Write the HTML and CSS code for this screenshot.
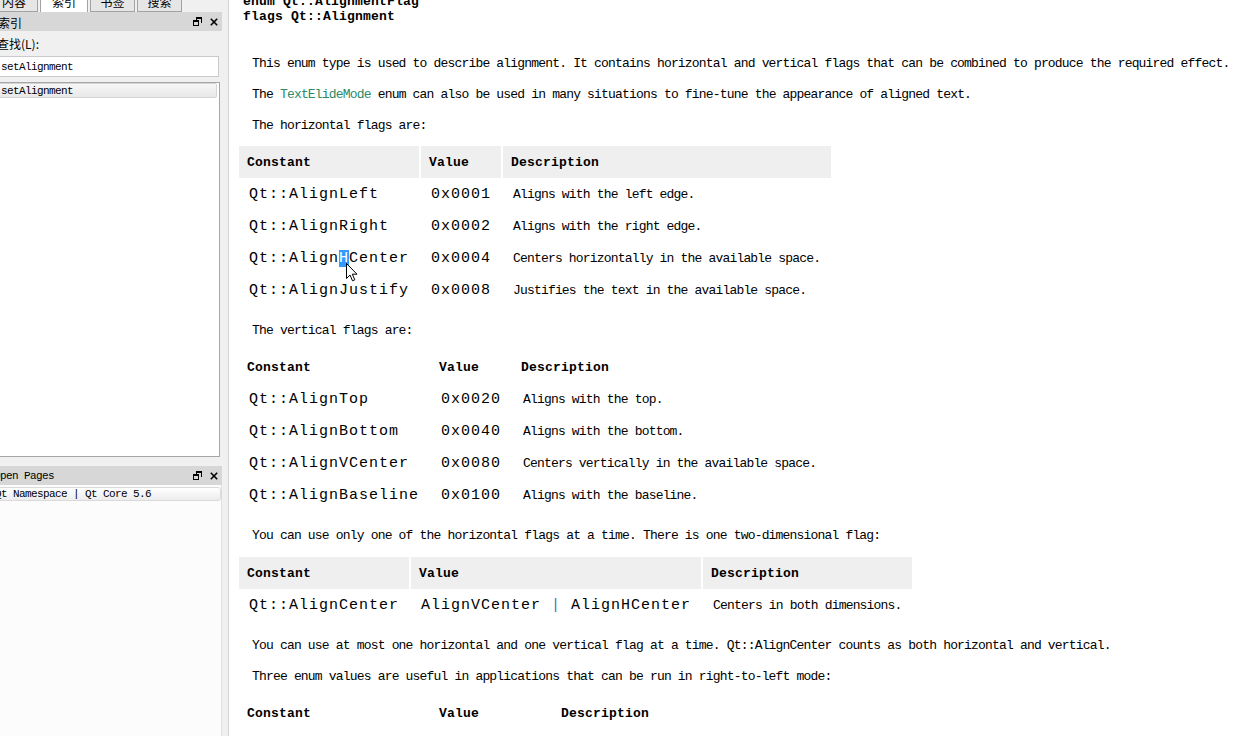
FILE: index.html
```html
<!DOCTYPE html>
<html>
<head>
    <meta charset="utf-8">
    <title>Qt Assistant - Qt Namespace</title>
    <link rel="stylesheet" href="styles.css">
</head>
<body>
<div class="window">
    <div class="sidebar">
        <div class="tabs">
            <div class="tab tab-first">内容</div>
            <div class="tab active">索引</div>
            <div class="tab">书签</div>
            <div class="tab">搜索</div>
        </div>
        <div class="dock-title">
            <span class="dock-name cjk">索引</span>
            <span class="dock-buttons">
                <svg width="9" height="9" viewBox="0 0 9 9"><path d="M3 0h6v6h-1v-4h-4v1h-1z" fill="#000"/><path d="M0 3h6v6h-6z M1 5v3h4v-3z" fill="#000" fill-rule="evenodd"/></svg>
                <svg width="8" height="8" viewBox="0 0 8 8"><path d="M0.8 0.8L7.2 7.2M7.2 0.8L0.8 7.2" stroke="#000" stroke-width="1.6"/></svg>
            </span>
        </div>
        <div class="find-label cjk">查找(L):</div>
        <div class="find-input">setAlignment</div>
        <div class="index-list">
            <div class="index-item">setAlignment</div>
        </div>
        <div class="dock-title open-title">
            <span class="dock-name">Open Pages</span>
            <span class="dock-buttons">
                <svg width="9" height="9" viewBox="0 0 9 9"><path d="M3 0h6v6h-1v-4h-4v1h-1z" fill="#000"/><path d="M0 3h6v6h-6z M1 5v3h4v-3z" fill="#000" fill-rule="evenodd"/></svg>
                <svg width="8" height="8" viewBox="0 0 8 8"><path d="M0.8 0.8L7.2 7.2M7.2 0.8L0.8 7.2" stroke="#000" stroke-width="1.6"/></svg>
            </span>
        </div>
        <div class="open-list">
            <div class="open-item">Qt Namespace | Qt Core 5.6</div>
        </div>
    </div>

    <div class="doc">
        <h3 class="doc-title">enum Qt::AlignmentFlag<br>flags Qt::Alignment</h3>

        <p class="intro">This enum type is used to describe alignment. It contains horizontal and vertical flags that can be combined to produce the required effect.</p>
        <p>The <a class="link" href="#">TextElideMode</a> enum can also be used in many situations to fine-tune the appearance of aligned text.</p>
        <p>The horizontal flags are:</p>

        <table class="valuelist shaded horizontal">
            <tr><th>Constant</th><th>Value</th><th>Description</th></tr>
            <tr><td><code>Qt::AlignLeft</code></td><td><code>0x0001</code></td><td class="desc">Aligns with the left edge.</td></tr>
            <tr><td><code>Qt::AlignRight</code></td><td><code>0x0002</code></td><td class="desc">Aligns with the right edge.</td></tr>
            <tr><td><code>Qt::Align<span class="sel">H<svg class="pointer" width="12" height="19" viewBox="0 0 12 19"><path d="M0.5 0.5V15.5L4 12L6.5 17.8L8.8 16.8L6.3 11.2H11Z" fill="#fff" stroke="#000" stroke-width="1" stroke-linejoin="round"/></svg></span>Center</code></td><td><code>0x0004</code></td><td class="desc">Centers horizontally in the available space.</td></tr>
            <tr><td><code>Qt::AlignJustify</code></td><td><code>0x0008</code></td><td class="desc">Justifies the text in the available space.</td></tr>
        </table>

        <p>The vertical flags are:</p>

        <table class="valuelist vertical">
            <tr><th>Constant</th><th>Value</th><th>Description</th></tr>
            <tr><td><code>Qt::AlignTop</code></td><td><code>0x0020</code></td><td class="desc">Aligns with the top.</td></tr>
            <tr><td><code>Qt::AlignBottom</code></td><td><code>0x0040</code></td><td class="desc">Aligns with the bottom.</td></tr>
            <tr><td><code>Qt::AlignVCenter</code></td><td><code>0x0080</code></td><td class="desc">Centers vertically in the available space.</td></tr>
            <tr><td><code>Qt::AlignBaseline</code></td><td><code>0x0100</code></td><td class="desc">Aligns with the baseline.</td></tr>
        </table>

        <p>You can use only one of the horizontal flags at a time. There is one two-dimensional flag:</p>

        <table class="valuelist shaded twodim">
            <tr><th>Constant</th><th>Value</th><th>Description</th></tr>
            <tr><td><code>Qt::AlignCenter</code></td><td><code>AlignVCenter <span class="op">|</span> AlignHCenter</code></td><td class="desc">Centers in both dimensions.</td></tr>
        </table>

        <p>You can use at most one horizontal and one vertical flag at a time. Qt::AlignCenter counts as both horizontal and vertical.</p>
        <p>Three enum values are useful in applications that can be run in right-to-left mode:</p>

        <table class="valuelist rtl">
            <tr><th>Constant</th><th>Value</th><th>Description</th></tr>
            <tr><td><code>Qt::AlignAbsolute</code></td><td><code>0x0010</code></td><td class="desc">If the widget's layout direction is Qt::RightToLeft, Qt::AlignLeft refers to the right edge.</td></tr>
            <tr><td><code>Qt::AlignLeading</code></td><td><code>AlignLeft</code></td><td class="desc">Synonym for Qt::AlignLeft.</td></tr>
            <tr><td><code>Qt::AlignTrailing</code></td><td><code>AlignRight</code></td><td class="desc">Synonym for Qt::AlignRight.</td></tr>
        </table>
    </div>
</div>
</body>
</html>
```

FILE: styles.css
```css
* {
    box-sizing: border-box;
}

body {
    margin: 0;
    overflow: hidden;
    background-color: #ffffff;
    color: #000000;
    font-family: "Liberation Mono", "Noto Sans CJK SC", monospace;
}

.window {
    display: flex;
    height: 736px;
}

.cjk {
    font-family: "Noto Sans CJK SC", sans-serif;
    font-size: 12px;
}

/* left dock */
.sidebar {
    flex: 0 0 229px;
    width: 229px;
    height: 736px;
    display: flex;
    flex-direction: column;
    background-color: #f0f0f0;
    border-right: 1px solid #d3d3d3;
    padding-right: 6px;
    overflow: hidden;
}

.tabs {
    height: 12px;
    flex: none;
    display: flex;
    align-items: flex-end;
    gap: 2px;
    overflow: hidden;
}

.tab {
    flex: none;
    width: 45px;
    height: 22px;
    padding-top: 3px;
    border: 1px solid #a3a3a3;
    background-color: #e6e6e6;
    font-family: "Noto Sans CJK SC", sans-serif;
    font-size: 12px;
    line-height: 16px;
    text-align: center;
}

.tab-first {
    width: 48px;
    margin-left: -10px;
}

.tab.active {
    width: 48px;
    background-color: #ffffff;
    border-bottom: none;
}

.dock-title {
    flex: none;
    height: 19px;
    display: flex;
    align-items: center;
    justify-content: space-between;
    padding-right: 4px;
    background-color: #d7d7d7;
}

.dock-name {
    margin-left: -2px;
    line-height: 15px;
    padding-top: 1px;
}

.dock-buttons {
    display: flex;
    align-items: center;
    gap: 8px;
}

.dock-buttons svg {
    display: block;
}

.find-label {
    margin: 5px 0 0 -3px;
    line-height: 15px;
}

.find-input {
    flex: none;
    height: 21px;
    margin: 5px 3px 0 -3px;
    padding-left: 3px;
    background-color: #ffffff;
    border: 1px solid #cacaca;
    font-size: 11px;
    letter-spacing: -0.6px;
    line-height: 20px;
}

.index-list {
    flex: none;
    height: 375px;
    margin: 5px 2px 0 -3px;
    background-color: #ffffff;
    border: 1px solid #a6a6a6;
}

.index-item {
    height: 15px;
    margin-right: 2px;
    padding-left: 2px;
    border: 1px solid #d4d4d4;
    border-radius: 2px;
    background: linear-gradient(#f7f7f7, #e8e8e8);
    font-size: 11px;
    letter-spacing: -0.6px;
    line-height: 14px;
}

.open-title {
    margin-top: 9px;
}

.open-title .dock-name {
    margin-left: -6px;
    font-size: 11px;
    letter-spacing: -0.6px;
}

.open-list {
    flex: 1;
    padding-top: 2px;
    background-color: #fcfcfc;
    border-right: 1px solid #dedede;
}

.open-item {
    height: 14px;
    margin-left: -7px;
    padding-left: 1px;
    border: 1px solid #dadada;
    border-radius: 3px;
    background: linear-gradient(#ffffff, #ececec);
    font-size: 11px;
    letter-spacing: -0.6px;
    line-height: 13px;
    white-space: nowrap;
}

/* documentation page */
.doc {
    flex: 1;
    display: flex;
    flex-direction: column;
    align-items: flex-start;
    padding-left: 14px;
    overflow: hidden;
}

.doc-title {
    margin: -6px 0 0;
    font-size: 13px;
    font-weight: bold;
    letter-spacing: 0.2px;
    line-height: 15px;
}

.doc p {
    margin: 16px 0 0 9px;
    font-size: 13px;
    letter-spacing: -0.82px;
    line-height: 15px;
    white-space: nowrap;
}

.doc p.intro {
    margin-top: 32px;
}

.link {
    color: #2b8a69;
    text-decoration: none;
}

.valuelist {
    margin: 13px 0 0 -6px;
    border-collapse: separate;
    border-spacing: 2px 0;
}

.valuelist.twodim {
    margin-top: 14px;
}

.valuelist + p {
    margin-top: 17px !important;
}

.valuelist th {
    height: 32px;
    padding: 0 0 0 8px;
    text-align: left;
    font-size: 13px;
    font-weight: bold;
    letter-spacing: 0.2px;
    white-space: nowrap;
}

.shaded th {
    background-color: #efefef;
}

.valuelist td {
    height: 32px;
    padding: 0 0 0 10px;
    vertical-align: middle;
    white-space: nowrap;
}

.valuelist code {
    font-family: "Liberation Mono", monospace;
    font-size: 15px;
    letter-spacing: 1px;
}

.valuelist td.desc {
    font-size: 13px;
    letter-spacing: -0.82px;
}

.op {
    color: #3f6fc4;
}

.sel {
    position: relative;
    background-color: #3399ff;
    color: #ffffff;
}

.pointer {
    position: absolute;
    left: 7px;
    top: 13px;
}

.horizontal th:nth-child(1) { width: 180px; }
.horizontal th:nth-child(2) { width: 80px; }
.horizontal th:nth-child(3) { width: 328px; }

.vertical th:nth-child(1) { width: 190px; }
.vertical th:nth-child(2) { width: 80px; }
.vertical th:nth-child(3) { width: 310px; }

.twodim th:nth-child(1) { width: 170px; }
.twodim th:nth-child(2) { width: 290px; }
.twodim th:nth-child(3) { width: 209px; }

.rtl th:nth-child(1) { width: 190px; }
.rtl th:nth-child(2) { width: 120px; }
.rtl th:nth-child(3) { width: 680px; }
```
